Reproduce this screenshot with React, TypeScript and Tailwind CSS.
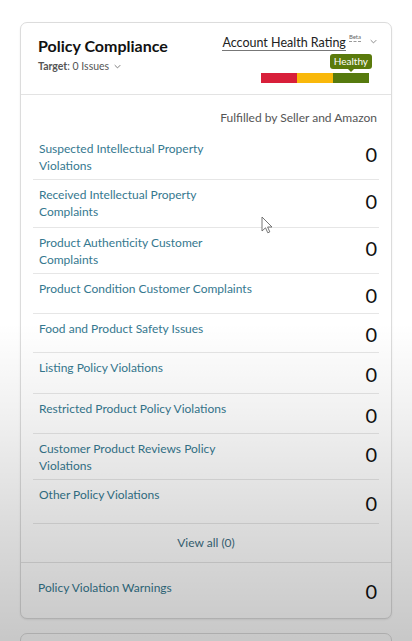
import React from "react";

const rows: { label: React.ReactNode; h: string; two: boolean }[] = [
  { label: <>Suspected Intellectual Property<br />Violations</>, h: "h-[46px]", two: true },
  { label: <>Received Intellectual Property<br />Complaints</>, h: "h-[48px]", two: true },
  { label: <>Product Authenticity Customer<br />Complaints</>, h: "h-[46px]", two: true },
  { label: <>Product Condition Customer Complaints</>, h: "h-[40px]", two: false },
  { label: <>Food and Product Safety Issues</>, h: "h-[39px]", two: false },
  { label: <>Listing Policy Violations</>, h: "h-[41px]", two: false },
  { label: <>Restricted Product Policy Violations</>, h: "h-[40px]", two: false },
  { label: <>Customer Product Reviews Policy<br />Violations</>, h: "h-[46px]", two: true },
  { label: <>Other Policy Violations</>, h: "h-[44px]", two: false },
];

function Chevron({ className }: { className?: string }) {
  return (
    <svg viewBox="0 0 10 6" className={className} fill="none" stroke="currentColor" strokeWidth="1.2">
      <path d="M1 1l4 4 4-4" />
    </svg>
  );
}

export default function App() {
  return (
    <div
      className="relative min-h-[641px] w-[412px] overflow-hidden bg-white pt-[22px]"
      style={{ fontFamily: "Lato, 'Noto Sans', Arial, sans-serif" }}
    >
      <div className="mx-[20px] rounded-[7px] border border-[#dcdcdc] bg-white shadow-[0_1px_2px_rgba(0,0,0,0.08)]">
        {/* header */}
        <div className="flex h-[72px] justify-between border-b border-[#e3e3e3] pl-[17px] pr-[14px] pt-[13px]">
          <div>
            <div className="text-[16px] font-bold leading-[20px] text-[#111]">Policy Compliance</div>
            <div className="mt-[4px] flex items-center text-[10.5px] leading-[12px] text-[#555]">
              <span className="font-bold">Target</span>
              <span>: 0 Issues</span>
              <Chevron className="ml-[5px] h-[5px] w-[7px] text-[#666]" />
            </div>
          </div>
          <div className="flex flex-col items-end">
            <div className="flex items-start">
              <span className="border-b border-[#777] text-[12.5px] leading-[14px] text-[#222]">Account Health Rating</span>
              <span className="ml-[3px] -mt-[3px] border-b border-dashed border-[#999] text-[6px] leading-[8px] text-[#666]">Beta</span>
              <Chevron className="ml-[9px] mt-[3px] h-[5px] w-[7px] text-[#777]" />
            </div>
            <div className="mr-[8px] mt-[3px] flex flex-col items-end">
              <div className="relative -mr-[3px] rounded-[3px] bg-[#5a7a0c] px-[4px] text-[10px] leading-[15px] text-white">
                Healthy
                <span className="absolute left-1/2 top-full -ml-[3px] h-0 w-0 border-x-[3px] border-t-[3px] border-x-transparent border-t-[#5a7a0c]" />
              </div>
              <div className="mt-[4px] flex h-[10px]">
                <div className="w-[36px] bg-[#d81f3a]" />
                <div className="w-[36px] bg-[#f9b80a]" />
                <div className="w-[36px] bg-[#567a0e]" />
              </div>
            </div>
          </div>
        </div>

        {/* body */}
        <div className="px-[12px] pt-[16px]">
          <div className="pr-[2px] text-right text-[12px] leading-[14px] text-[#555]">Fulfilled by Seller and Amazon</div>
          <div className="mt-[9px]">
            {rows.map((r, i) => (
              <div
                key={i}
                className={`flex items-center justify-between border-b border-[#e6e6e6] pl-[6px] pr-[2px] ${r.h}`}
              >
                <div className="self-start pt-[6px] text-[12px] leading-[17px] text-[#35788f]">{r.label}</div>
                <div className={`text-[20px] leading-[22px] text-[#111] ${r.two ? "-mt-[5px]" : "mt-[2px]"}`}>0</div>
              </div>
            ))}
          </div>
          <div className="flex h-[38px] items-center justify-center text-[12px] text-[#3d6e82]">View all (0)</div>
        </div>

        <div className="flex h-[56px] justify-between border-t border-[#e3e3e3] pl-[17px] pr-[14px]">
          <div className="pt-[16px] text-[12px] leading-[17px] text-[#35788f]">Policy Violation Warnings</div>
          <div className="pt-[17px] text-[20px] leading-[22px] text-[#111]">0</div>
        </div>
      </div>

      <div className="mx-[20px] mt-[14px] h-[40px] rounded-t-[7px] border border-[#dcdcdc] bg-white" />

      {/* mouse cursor */}
      <svg className="pointer-events-none absolute left-[261px] top-[216px] h-[18px] w-[12px]" viewBox="0 0 12 18">
        <path d="M1 1v14l3.5-3.2 2.3 5 2-0.9-2.2-4.9H11z" fill="white" stroke="#666" strokeWidth="0.9" strokeLinejoin="round" />
      </svg>

      {/* video darkening overlay */}
      <div
        className="pointer-events-none absolute inset-0"
        style={{
          background:
            "linear-gradient(to bottom, rgba(0,0,0,0) 0%, rgba(0,0,0,0) 48%, rgba(0,0,0,0.06) 62%, rgba(0,0,0,0.15) 80%, rgba(0,0,0,0.24) 100%)",
        }}
      />
    </div>
  );
}
